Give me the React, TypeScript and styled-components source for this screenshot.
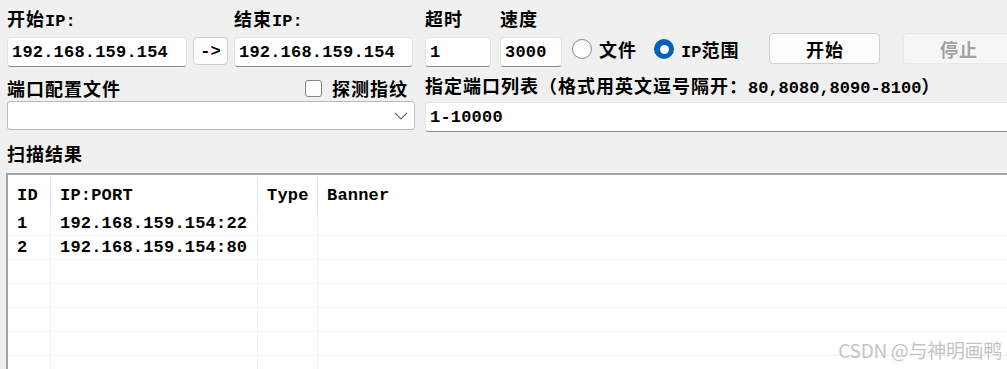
import React from 'react';
import styled, { createGlobalStyle } from 'styled-components';

const GlobalStyle = createGlobalStyle`
  html, body {
    margin: 0;
    padding: 0;
    background: #f0f0f0;
    overflow: hidden;
  }
  body {
    font-family: "Liberation Mono", "Noto Sans CJK SC", monospace;
    font-weight: bold;
    font-size: 17px;
    color: #000;
  }
`;

const Page = styled.div`
  position: relative;
  width: 1007px;
  height: 369px;
  overflow: hidden;
`;

// chinese glyphs are a touch wider than the latin ones in the original
const Han = styled.span`
  font-size: 18px;
  letter-spacing: 1px;
`;

const Toolbar = styled.div`
  display: flex;
  align-items: flex-end;
  padding: 11px 0 0 7px;
`;

const Field = styled.div<{ $w: number; $ml?: number }>`
  display: flex;
  flex-direction: column;
  gap: 6px;
  width: ${(p) => p.$w}px;
  margin-left: ${(p) => p.$ml ?? 0}px;
  flex-shrink: 0;
`;

const Label = styled.div`
  height: 20px;
  line-height: 20px;
  white-space: nowrap;
`;

const TextBox = styled.div<{ $h?: number }>`
  height: ${(p) => p.$h ?? 30}px;
  box-sizing: border-box;
  background: #fff;
  border: 1px solid #e3e3e3;
  border-bottom: 1px solid #8a8a8a;
  border-radius: 4px;
  padding-left: 4px;
  display: flex;
  align-items: center;
  white-space: nowrap;
  letter-spacing: 0.2px;
`;

const ArrowButton = styled.div`
  width: 35px;
  height: 28px;
  margin: 0 6px 2px;
  box-sizing: border-box;
  background: #fdfdfd;
  border: 1px solid #d0d0d0;
  border-radius: 4px;
  display: flex;
  align-items: center;
  justify-content: center;
  flex-shrink: 0;
`;

const RadioGroup = styled.div`
  display: flex;
  align-items: center;
  gap: 17px;
  margin: 0 0 5px 10px;
`;

const RadioItem = styled.label`
  display: flex;
  align-items: center;
  gap: 7px;
  white-space: nowrap;
`;

const RadioCircle = styled.span<{ $on?: boolean }>`
  width: 20px;
  height: 20px;
  box-sizing: border-box;
  border-radius: 50%;
  background: ${(p) => (p.$on ? '#005fb8' : '#fff')};
  border: ${(p) => (p.$on ? 'none' : '1px solid #8a8a8a')};
  display: flex;
  align-items: center;
  justify-content: center;
  &::after {
    content: '';
    display: ${(p) => (p.$on ? 'block' : 'none')};
    width: 9px;
    height: 9px;
    border-radius: 50%;
    background: #fff;
  }
`;

const ActionButton = styled.div<{ $disabled?: boolean; $ml: number }>`
  width: 111px;
  height: 31px;
  margin: 0 0 3px ${(p) => p.$ml}px;
  box-sizing: border-box;
  flex-shrink: 0;
  border-radius: 4px;
  background: ${(p) => (p.$disabled ? '#f6f6f6' : '#fdfdfd')};
  border: 1px solid ${(p) => (p.$disabled ? '#e9e9e9' : '#d0d0d0')};
  color: ${(p) => (p.$disabled ? '#a2a2a2' : '#000')};
  display: flex;
  align-items: center;
  justify-content: center;
`;

const SecondRow = styled.div`
  display: flex;
  margin-top: 11px;
  padding-left: 7px;
`;

const PortFile = styled.div`
  width: 408px;
  display: flex;
  flex-direction: column;
  gap: 3px;
  flex-shrink: 0;
`;

const LabelRow = styled.div`
  display: flex;
  justify-content: space-between;
  align-items: center;
  height: 20px;
`;

const CheckItem = styled.label`
  display: flex;
  align-items: center;
  gap: 10px;
  margin-right: 7px;
`;

const CheckBox = styled.span`
  width: 17px;
  height: 17px;
  box-sizing: border-box;
  border: 1px solid #858585;
  border-radius: 3px;
  background: #fff;
`;

const Combo = styled.div`
  height: 29px;
  box-sizing: border-box;
  background: #fff;
  border: 1px solid #b9b9b9;
  border-radius: 3px;
  display: flex;
  align-items: center;
  justify-content: flex-end;
  padding-right: 6px;
`;

const PortList = styled.div`
  flex: 1;
  margin-left: 10px;
  display: flex;
  flex-direction: column;
  gap: 4px;
  margin-right: -6px;
`;

const SectionTitle = styled.div`
  margin: 14px 0 0 7px;
  height: 20px;
  line-height: 20px;
`;

const TableFrame = styled.div`
  margin: 7px 0 0 6px;
  height: 200px;
  background: #fff;
  border-top: 2px solid #a3a3a3;
  border-left: 2px solid #a3a3a3;
  overflow: hidden;
`;

const GridRow = styled.div<{ $head?: boolean }>`
  display: grid;
  grid-template-columns: 43px 207px 60px 1fr;
  height: ${(p) => (p.$head ? 37 : 24)}px;
  box-sizing: border-box;
  border-bottom: ${(p) => (p.$head ? 'none' : '1px solid #f0f0f0')};
`;

const Cell = styled.div<{ $head?: boolean }>`
  box-sizing: border-box;
  padding-left: 9px;
  display: flex;
  align-items: center;
  white-space: nowrap;
  letter-spacing: 0.2px;
  border-right: 1px solid ${(p) => (p.$head ? '#e6e6e6' : '#f0f0f0')};
  margin-top: ${(p) => (p.$head ? 2 : 0)}px;
  padding-top: ${(p) => (p.$head ? 1 : 0)}px;
  &:last-child {
    border-right: none;
  }
`;

const Watermark = styled.div`
  position: absolute;
  right: 5px;
  bottom: 6px;
  font-family: "Noto Sans CJK SC", "Liberation Sans", sans-serif;
  font-weight: normal;
  font-size: 19px;
  color: #c4c4c4;
  letter-spacing: -0.3px;
`;

const Chevron = () => (
  <svg width="14" height="8" viewBox="0 0 14 8">
    <path d="M1 1 L7 7 L13 1" fill="none" stroke="#6a6a6a" strokeWidth="1.1" />
  </svg>
);

const rows = [
  { id: '1', addr: '192.168.159.154:22' },
  { id: '2', addr: '192.168.159.154:80' },
  { id: '', addr: '' },
  { id: '', addr: '' },
  { id: '', addr: '' },
  { id: '', addr: '' },
  { id: '', addr: '' },
];

const App = () => (
  <Page>
    <GlobalStyle />
    <Toolbar>
      <Field $w={180}>
        <Label><Han>开始</Han>IP:</Label>
        <TextBox>192.168.159.154</TextBox>
      </Field>
      <ArrowButton>-&gt;</ArrowButton>
      <Field $w={179}>
        <Label><Han>结束</Han>IP:</Label>
        <TextBox>192.168.159.154</TextBox>
      </Field>
      <Field $w={66} $ml={12}>
        <Label><Han>超时</Han></Label>
        <TextBox>1</TextBox>
      </Field>
      <Field $w={62} $ml={9}>
        <Label><Han>速度</Han></Label>
        <TextBox>3000</TextBox>
      </Field>
      <RadioGroup>
        <RadioItem>
          <RadioCircle />
          <Han>文件</Han>
        </RadioItem>
        <RadioItem>
          <RadioCircle $on />
          <span>IP<Han>范围</Han></span>
        </RadioItem>
      </RadioGroup>
      <ActionButton $ml={30}><Han>开始</Han></ActionButton>
      <ActionButton $ml={23} $disabled>
        <Han>停止</Han>
      </ActionButton>
    </Toolbar>

    <SecondRow>
      <PortFile>
        <LabelRow>
          <Han>端口配置文件</Han>
          <CheckItem>
            <CheckBox />
            <Han>探测指纹</Han>
          </CheckItem>
        </LabelRow>
        <Combo>
          <Chevron />
        </Combo>
      </PortFile>
      <PortList>
        <Label>
          <Han>指定端口列表（格式用英文逗号隔开：</Han>80,8080,8090-8100<Han>）</Han>
        </Label>
        <TextBox>1-10000</TextBox>
      </PortList>
    </SecondRow>

    <SectionTitle><Han>扫描结果</Han></SectionTitle>
    <TableFrame>
      <GridRow $head>
        <Cell $head>ID</Cell>
        <Cell $head>IP:PORT</Cell>
        <Cell $head>Type</Cell>
        <Cell $head>Banner</Cell>
      </GridRow>
      {rows.map((r, i) => (
        <GridRow key={`row_${i}`}>
          <Cell>{r.id}</Cell>
          <Cell>{r.addr}</Cell>
          <Cell />
          <Cell />
        </GridRow>
      ))}
    </TableFrame>
    <Watermark>CSDN @与神明画鸭</Watermark>
  </Page>
);

export default App;
